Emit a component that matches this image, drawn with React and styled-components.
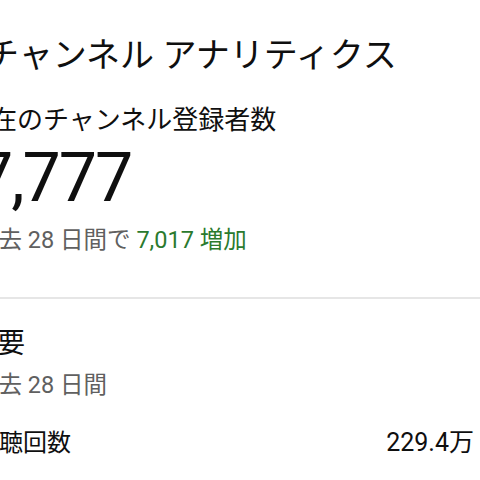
import styled, { createGlobalStyle } from 'styled-components';

const GlobalStyle = createGlobalStyle`
	html, body {
		margin: 0;
		padding: 0;
		background: #ffffff;
	}
	body {
		font-family: Roboto, 'Noto Sans CJK JP', sans-serif;
		color: #0f0f0f;
	}
`;

function App() {
	return (
		<Page>
			<GlobalStyle />
			<Section>
				<Title>チャンネル アナリティクス</Title>
				<Label>現在のチャンネル登録者数</Label>
				<BigNumber>7,777</BigNumber>
				<Caption>
					過去 28 日間で <Growth>7,017 増加</Growth>
				</Caption>
			</Section>
			<Divider />
			<Section>
				<CardTitle>概要</CardTitle>
				<Caption>過去 28 日間</Caption>
				<StatRow>
					<span>視聴回数</span>
					<StatValue>229.4万</StatValue>
				</StatRow>
			</Section>
		</Page>
	);
}

export default App;

const Page = styled.div`
	width: 480px;
	height: 480px;
	overflow: hidden;
	padding-top: 35px;
	box-sizing: border-box;
`;
const Section = styled.div`
	display: flex;
	flex-direction: column;
	margin-left: -25px;
	padding-right: 6px;
`;
const Title = styled.h1`
	margin: 0 0 0 10px;
	font-size: 34px;
	line-height: 40px;
	font-weight: 400;
`;
const Label = styled.div`
	margin: 29px 0 0 -10px;
	font-size: 26px;
	line-height: 32px;
`;
const BigNumber = styled.div`
	margin-top: 4px;
	font-size: 68px;
	line-height: 76px;
	letter-spacing: -2px;
`;
const Caption = styled.div`
	margin-top: 9px;
	font-size: 23.5px;
	line-height: 30px;
	color: #606060;
`;
const Growth = styled.span`
	color: #2b7a2e;
`;
const Divider = styled.div`
	margin-top: 42px;
	height: 2px;
	background: #e6e6e6;
`;
const CardTitle = styled.h2`
	margin: 27px 0 0 -6px;
	font-size: 28px;
	line-height: 36px;
	font-weight: 400;
	& + div {
		margin-top: 8px;
	}
`;
const StatRow = styled.div`
	display: flex;
	justify-content: space-between;
	align-items: center;
	margin-top: 27px;
	font-size: 24px;
	line-height: 32px;
`;
const StatValue = styled.span`
	font-size: 25px;
`;
